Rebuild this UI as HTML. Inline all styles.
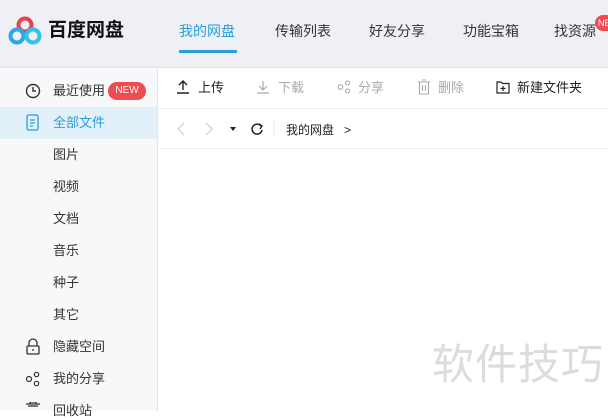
<!DOCTYPE html>
<html><head><meta charset="utf-8"><style>
*{margin:0;padding:0;box-sizing:border-box}
body{width:608px;height:411px;overflow:hidden;background:#fff;font-family:"Liberation Sans","Noto Sans CJK SC",sans-serif;position:relative;color:#333}
.hdr{position:absolute;left:0;top:0;width:608px;height:68px;background:#eef0f5;border-bottom:1px solid #dfe2e8}
.logo{position:absolute;left:8px;top:15px}
.brand{position:absolute;left:48px;top:15px;font-size:19px;font-weight:bold;color:#111;letter-spacing:0}
.nav{position:absolute;top:21px;font-size:14px;color:#333}
.side{position:absolute;left:0;top:69px;width:158px;height:342px;background:#f7f8fa;border-right:1px solid #e4e6ea}
.it{position:absolute;left:53px;font-size:13px;color:#333;line-height:16px}
.ic{position:absolute;left:25px}
.tb{position:absolute;top:80px;font-size:13px;line-height:16px}
.wm{position:absolute;left:432px;top:340px;font-size:42px;color:#dcdcdc;letter-spacing:1px;line-height:50px}
</style></head><body>
<div class="hdr">
<svg class="logo" width="34" height="32" viewBox="0 0 34 32"><circle cx="17" cy="10" r="6.5" fill="none" stroke="#e8424a" stroke-width="4"/><circle cx="9" cy="21" r="6.5" fill="none" stroke="#2aa8e8" stroke-width="4"/><circle cx="25" cy="21" r="6.5" fill="none" stroke="#34c3e8" stroke-width="4"/></svg>
<div class="brand">百度网盘</div>
<div class="nav" style="left:179px;color:#2a9fd6">我的网盘</div>
<div style="position:absolute;left:179px;top:50px;width:58px;height:3px;background:#2a9fd6"></div>
<div class="nav" style="left:275px">传输列表</div>
<div class="nav" style="left:369px">好友分享</div>
<div class="nav" style="left:463px">功能宝箱</div>
<div class="nav" style="left:554px">找资源</div>
<div style="position:absolute;left:595px;top:15px;width:24px;height:16px;border-radius:8px;background:#ee4b52;color:#fff;font-size:9px;line-height:16px;padding-left:3px">NE</div>
</div>
<div class="side">
<div style="position:absolute;left:0;top:38px;width:157px;height:32px;background:#e2f0fa"></div>
</div>
<svg class="ic" style="top:83px" width="16" height="16" viewBox="0 0 16 16"><circle cx="8" cy="8" r="6.5" fill="none" stroke="#333" stroke-width="1.4"/><path d="M8 4v4h3" fill="none" stroke="#333" stroke-width="1.4"/></svg>
<div class="it" style="top:83px">最近使用</div>
<div style="position:absolute;left:108px;top:82px;width:38px;height:18px;border-radius:9px;background:#ee4b52;color:#fff;font-size:10px;line-height:18px;text-align:center">NEW</div>
<svg class="ic" style="top:114px" width="16" height="18" viewBox="0 0 16 18"><rect x="2" y="1" width="11" height="15" rx="1.5" fill="none" stroke="#2a9fd6" stroke-width="1.3"/><path d="M5 6h5M5 9h5M5 12h3" stroke="#2a9fd6" stroke-width="1.2"/></svg>
<div class="it" style="top:115px;color:#2a9fd6">全部文件</div>
<div class="it" style="top:147px">图片</div>
<div class="it" style="top:179px">视频</div>
<div class="it" style="top:211px">文档</div>
<div class="it" style="top:243px">音乐</div>
<div class="it" style="top:275px">种子</div>
<div class="it" style="top:307px">其它</div>
<svg class="ic" style="top:338px" width="16" height="18" viewBox="0 0 16 18"><path d="M4 8V5a4 4 0 0 1 8 0v3" fill="none" stroke="#333" stroke-width="1.3"/><rect x="2" y="8" width="12" height="8" rx="1" fill="none" stroke="#333" stroke-width="1.3"/><path d="M8 11v2" stroke="#333" stroke-width="1.3"/></svg>
<div class="it" style="top:339px">隐藏空间</div>
<svg class="ic" style="top:371px" width="16" height="16" viewBox="0 0 16 16"><circle cx="4" cy="8" r="2.5" fill="none" stroke="#333" stroke-width="1.2"/><circle cx="11.5" cy="3.5" r="2.2" fill="none" stroke="#333" stroke-width="1.2"/><circle cx="11.5" cy="12.5" r="2.2" fill="none" stroke="#333" stroke-width="1.2"/></svg>
<div class="it" style="top:371px">我的分享</div>
<svg class="ic" style="top:402px" width="16" height="10" viewBox="0 0 16 10"><path d="M1 2h14M5 2V0h6v2M3 4h10" stroke="#333" stroke-width="1.3" fill="none"/></svg>
<div class="it" style="top:403px">回收站</div>

<div style="position:absolute;left:159px;top:108px;width:449px;height:1px;background:#f0f0f2"></div>
<div style="position:absolute;left:159px;top:148px;width:449px;height:1px;background:#eceef1"></div>
<svg style="position:absolute;left:176px;top:80px" width="14" height="14" viewBox="0 0 14 14"><path d="M7 10V1M3 5l4-4 4 4M1 13h12" fill="none" stroke="#222" stroke-width="1.4"/></svg>
<div class="tb" style="left:198px;color:#222">上传</div>
<svg style="position:absolute;left:256px;top:80px" width="14" height="14" viewBox="0 0 14 14"><path d="M7 1v9M3 6l4 4 4-4M1 13h12" fill="none" stroke="#aaa" stroke-width="1.2"/></svg>
<div class="tb" style="left:278px;color:#aaa">下载</div>
<svg style="position:absolute;left:337px;top:80px" width="14" height="14" viewBox="0 0 14 14"><circle cx="3.5" cy="7" r="2.3" fill="none" stroke="#aaa" stroke-width="1.1"/><circle cx="10.5" cy="3" r="2" fill="none" stroke="#aaa" stroke-width="1.1"/><circle cx="10.5" cy="11" r="2" fill="none" stroke="#aaa" stroke-width="1.1"/></svg>
<div class="tb" style="left:358px;color:#aaa">分享</div>
<svg style="position:absolute;left:417px;top:79px" width="14" height="16" viewBox="0 0 14 16"><path d="M1 3h12M5 1h4M2.5 3v12h9V3M5.5 6v6M8.5 6v6" fill="none" stroke="#aaa" stroke-width="1.1"/></svg>
<div class="tb" style="left:438px;color:#aaa">删除</div>
<svg style="position:absolute;left:496px;top:80px" width="14" height="14" viewBox="0 0 14 14"><path d="M1 2h4l1.5 1.5H13V13H1z" fill="none" stroke="#222" stroke-width="1.2"/><path d="M7 6v5M4.5 8.5h5" stroke="#222" stroke-width="1.2"/></svg>
<div class="tb" style="left:517px;color:#222">新建文件夹</div>

<svg style="position:absolute;left:175px;top:121px" width="100" height="16" viewBox="0 0 100 16"><path d="M9 2L3 8l6 6" fill="none" stroke="#ccc" stroke-width="1.2"/><path d="M31 2l6 6-6 6" fill="none" stroke="#ccc" stroke-width="1.2"/><path d="M55 6h6l-3 4z" fill="#222"/><path d="M86 5a5 5 0 1 0 1 4" fill="none" stroke="#222" stroke-width="1.5"/><path d="M84 3l3 2-2 3" fill="none" stroke="#222" stroke-width="1.4"/><path d="M99 0v16" stroke="#e6e6e6"/></svg>
<div style="position:absolute;left:286px;top:121px;font-size:12px;color:#222">我的网盘&nbsp;&nbsp;&nbsp;&gt;</div>
<div class="wm">软件技巧</div>
</body></html>
